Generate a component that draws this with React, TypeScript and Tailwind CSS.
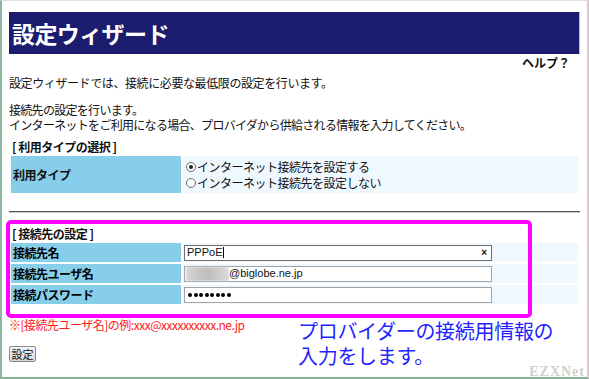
import React from "react";

const jp = "font-['Noto_Sans_CJK_JP',sans-serif]";

function Radio({ checked }: { checked?: boolean }) {
  return (
    <span className="inline-flex items-center justify-center w-[10px] h-[10px] rounded-full border border-[#6b6b6b] bg-white mr-[1px]">
      {checked && <span className="w-[4px] h-[4px] rounded-full bg-[#222]" />}
    </span>
  );
}

function FieldRow({ label, children }: { label: string; children: React.ReactNode }) {
  return (
    <div className="flex gap-[2px] h-[19px]">
      <div className="w-[170px] bg-[#87ceeb] pl-[2px] flex items-center text-[12px] font-bold tracking-[-0.5px] text-black">
        {label}
      </div>
      <div className="flex-1 bg-[#f0f8ff] flex items-center">{children}</div>
    </div>
  );
}

export default function App() {
  return (
    <div
      className={`relative w-[589px] h-[379px] overflow-hidden bg-white border-l-2 border-l-[#8db7a0] border-t border-t-[#e8dae2] border-r-2 border-r-[#d8c8d2] border-b-2 border-b-[#86b29a] text-[#111] ${jp}`}
    >
      <div className="ml-[7px] w-[571px]">
        <div className="mt-[11px] h-[42px] bg-[#1c1c6e] border-r border-r-[#b8b8d8] flex items-center pl-[3px]">
          <span className="text-white text-[23px] font-bold leading-none tracking-[-0.6px]">設定ウィザード</span>
        </div>

        <div className="mt-[3px] h-[12px] leading-[12px] text-right pr-[10px] text-[12px] font-bold">ヘルプ？</div>

        <p className="mt-[7px] text-[12px] leading-[14px] tracking-[-0.4px]">
          設定ウィザードでは、接続に必要な最低限の設定を行います。
        </p>
        <div className="mt-[12px] text-[12px] tracking-[-0.7px]">
          <div className="h-[15px] leading-[15px]">接続先の設定を行います。</div>
          <div className="h-[15px] leading-[15px]">
            インターネットをご利用になる場合、プロバイダから供給される情報を入力してください。
          </div>
        </div>

        <div className="mt-[8px] pl-[3px] text-[12px] leading-[14px] font-bold tracking-[-0.5px]">[ 利用タイプの選択 ]</div>

        <div className="flex gap-[2px] p-[2px]">
          <div className="w-[170px] h-[37px] bg-[#87ceeb] pl-[2px] flex items-center text-[12px] font-bold tracking-[-0.5px]">
            利用タイプ
          </div>
          <div className="flex-1 bg-[#f0f8ff] pl-[3px] flex flex-col justify-center text-[12px] leading-[16px] tracking-[-0.5px]">
            <div className="flex items-center">
              <Radio checked />
              インターネット接続先を設定する
            </div>
            <div className="flex items-center">
              <Radio />
              インターネット接続先を設定しない
            </div>
          </div>
        </div>

        <div className="mt-[16px] h-[2px] border-t border-t-[#555] border-b border-b-[#c8c8c8]" />

        <div className="mt-[14px] pl-[3px] text-[12px] leading-[14px] font-bold tracking-[-0.5px]">[ 接続先の設定 ]</div>

        <div className="flex flex-col gap-[2px] p-[2px]">
          <FieldRow label="接続先名">
            <div className="ml-[1px] w-[308px] h-[16px] border border-[#6e6e6e] bg-white flex items-center pl-[2px] pr-[4px] text-[11px] font-['Liberation_Sans',sans-serif]">
              <span>PPPoE</span>
              <span className="w-[1px] h-[11px] bg-black ml-[1px]" />
              <span className="ml-auto text-[10px] font-bold leading-none">×</span>
            </div>
          </FieldRow>
          <FieldRow label="接続先ユーザ名">
            <div className="ml-[1px] w-[308px] h-[16px] border border-[#a3a3a3] bg-white flex items-center pl-[1px] text-[11px] font-['Liberation_Sans',sans-serif]">
              <span className="w-[43px] h-[14px] bg-gradient-to-r from-[#d4d4d4] via-[#bdbdbd] to-[#d9d9d9] blur-[1px]" />
              <span>@biglobe.ne.jp</span>
            </div>
          </FieldRow>
          <FieldRow label="接続パスワード">
            <div className="ml-[1px] w-[308px] h-[16px] border border-[#a3a3a3] bg-white flex items-center gap-[1.5px] pl-[3px]">
              {[0, 1, 2, 3, 4, 5, 6, 7].map((i) => (
                <span key={i} className="w-[4px] h-[4px] rounded-full bg-black" />
              ))}
            </div>
          </FieldRow>
        </div>

        <div className="mt-[12px] text-[12px] leading-[14px] text-[#ff1a1a] tracking-[-0.5px]">
          ※[接続先ユーザ名]の例:xxx@xxxxxxxxxx.ne.jp
        </div>

        <button className="mt-[14px] w-[27px] h-[16px] border border-[#8a8a8a] rounded-[2px] bg-gradient-to-b from-[#f4f4f4] to-[#d6d6d6] text-[11px] leading-none flex items-center justify-center">
          設定
        </button>
      </div>

      <div className="absolute left-[4px] top-[219px] w-[526px] h-[98px] border-4 border-[#ff00ff] rounded-[5px]" />

      <div className="absolute left-[296px] top-[317px] text-[20px] text-[#1f1fff] tracking-[-0.3px]">
        <div className="h-[25px] leading-[25px]">プロバイダーの接続用情報の</div>
        <div className="h-[25px] leading-[25px]">入力をします。</div>
      </div>

      <div className="absolute right-[2px] top-[360px] text-[14px] font-bold text-[#cfcfcf] tracking-[1px] font-['Liberation_Serif',serif]">
        EZXNet
      </div>
    </div>
  );
}
